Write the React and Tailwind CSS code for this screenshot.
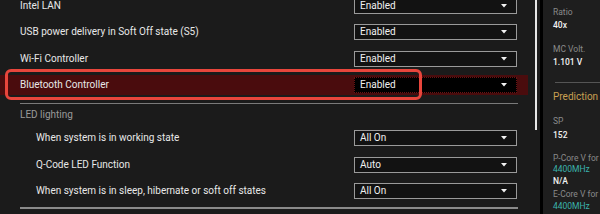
import React from 'react';

const rows = [
  { label: 'Intel LAN', value: 'Enabled', h: 'h-[27px]' },
  { label: 'USB power delivery in Soft Off state (S5)', value: 'Enabled', h: 'h-[26px]' },
  { label: 'Wi-Fi Controller', value: 'Enabled', h: 'h-[27px]' },
  { label: 'Bluetooth Controller', value: 'Enabled', h: 'h-[26px]', active: true },
];

const ledRows = [
  { label: 'When system is in working state', value: 'All On', h: 'h-[26px]' },
  { label: 'Q-Code LED Function', value: 'Auto', h: 'h-[27px]' },
  { label: 'When system is in sleep, hibernate or soft off states', value: 'All On', h: 'h-[26px]' },
];

const Caret = () => (
  <svg width="6" height="4" viewBox="0 0 6 4" className="mr-[9px]">
    <path d="M0 0h6L3 3.5z" fill="#f2f2f2" />
  </svg>
);

const Select = ({ value, active }) => (
  <div
    className={`flex h-[16px] w-[163px] items-center justify-between pl-[5px] ${
      active ? 'border border-dotted border-[#6a1414] bg-black' : 'border border-[#9a9a9a] bg-[#121212]'
    }`}
  >
    <span className="text-[10px] leading-none text-[#f0f0f0]">{value}</span>
    <Caret />
  </div>
);

const Row = ({ label, value, h, active, indent }) => (
  <div className={`flex items-center ${h}`}>
    <div className={`flex h-[20px] w-[528px] items-center ${active ? 'bg-[#4a0c0d]' : ''}`}>
      <span className={`${indent ? 'w-[354px] pl-[36px]' : 'w-[354px] pl-[20px]'} text-[10px] leading-none text-[#e8e8e8]`}>
        {label}
      </span>
      <Select value={value} active={active} />
    </div>
  </div>
);

const Label = ({ children, className = '' }) => (
  <div className={`text-[8.5px] text-[#8a8a8a] ${className}`}>{children}</div>
);

const Value = ({ children, className = '' }) => (
  <div className={`text-[8.5px] font-medium text-[#f2f2f2] ${className}`}>{children}</div>
);

export default function App() {
  return (
    <div className="flex h-[214px] w-[600px] overflow-hidden bg-[#1b1b1b] font-['Roboto',sans-serif]">
      {/* main settings list */}
      <div className="relative w-[540px] shrink-0">
        <div className="-mt-[8px]">
          {rows.map((r) => (
            <Row key={r.label} {...r} />
          ))}
          <div className="ml-[20px] mt-[5px] h-[1px] w-[498px] bg-[#7a7a7a]" />
          <div className="flex h-[21px] items-center pl-[20px] text-[10px] leading-none text-[#9a9a9a]">
            LED lighting
          </div>
          {ledRows.map((r) => (
            <Row key={r.label} {...r} indent />
          ))}
          <div className="ml-[20px] mt-[3px] h-[2px] w-[498px] bg-[#8a8a8a]" />
        </div>

        {/* scrollbar */}
        <div className="absolute left-[535px] top-0 h-[130px] w-[2px] bg-[#e6e6e6]" />

        {/* annotation outline */}
        <div className="absolute left-[5px] top-[69px] h-[31px] w-[417px] rounded-[6px] border-[3px] border-[#e8463c]" />
      </div>

      <div className="w-[3px] shrink-0 bg-black" />

      {/* right hardware monitor */}
      <div className="flex-1 bg-[#1e1e1e] pl-[10px]">
        <Label className="mt-[6px] leading-[13px]">Ratio</Label>
        <Value className="leading-[13px]">40x</Value>
        <Label className="mt-[11px] leading-[13px]">MC Volt.</Label>
        <Value className="leading-[13px]">1.101 V</Value>
        <div className="ml-[2px] mt-[13px] h-[1px] bg-[#555]" />
        <div className="mt-[6px] text-[10px] leading-[16px] text-[#c9a052]">Prediction</div>
        <Label className="mt-[9px] leading-[14px]">SP</Label>
        <Value className="leading-[14px]">152</Value>
        <Label className="mt-[10px] leading-[12px]">P-Core V for</Label>
        <div className="text-[8.5px] leading-[11px] text-[#3bb3ad]">4400MHz</div>
        <Value className="leading-[13px]">N/A</Value>
        <Label className="leading-[12px]">E-Core V for</Label>
        <div className="text-[8.5px] leading-[12px] text-[#3bb3ad]">4400MHz</div>
      </div>
    </div>
  );
}
